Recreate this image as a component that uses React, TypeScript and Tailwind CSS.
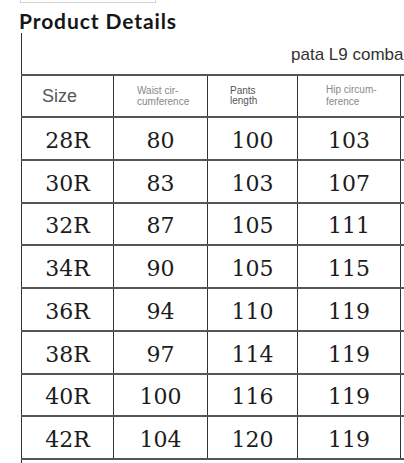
import React from 'react';

const rows: [string, number, number, number][] = [
  ['28R', 80, 100, 103],
  ['30R', 83, 103, 107],
  ['32R', 87, 105, 111],
  ['34R', 90, 105, 115],
  ['36R', 94, 110, 119],
  ['38R', 97, 114, 119],
  ['40R', 100, 116, 119],
  ['42R', 104, 120, 119],
];

const cell = 'border-x border-x-[#333] border-y-2 border-y-[#555] text-center align-middle p-0';

export default function App() {
  return (
    <div className="w-[404px] h-[463px] overflow-hidden bg-white">
      {/* cut-off box above the heading */}
      <div className="ml-[20px] w-[136px] h-[3px] border border-t-0 border-[#d4d4d4]" />

      <h2 className="ml-[19px] mt-[5px] h-[25px] text-[21px] leading-[25px] font-bold text-[#161616] font-['Comic_Sans_MS','Lato',sans-serif] tracking-[0.9px]">
        Product Details
      </h2>

      <table className="ml-[21px] border-collapse table-fixed w-[480px] font-['DejaVu_Serif',serif]">
        <colgroup>
          <col className="w-[92px]" />
          <col className="w-[94px]" />
          <col className="w-[90px]" />
          <col className="w-[103px]" />
          <col className="w-[101px]" />
        </colgroup>
        <tbody>
          <tr className="h-[42px]">
            <td colSpan={5} className="border-l border-l-[#333] border-b-2 border-b-[#555] p-0 pl-[269px] align-middle">
              <span className="block whitespace-nowrap pt-[2px] text-[17px] text-[#333] font-['Liberation_Sans',sans-serif]">
                pata L9 comba
              </span>
            </td>
          </tr>
          <tr className="h-[42px] font-['Liberation_Sans',sans-serif]">
            <td className={`${cell} text-left pl-[20px] text-[18px] text-[#555]`}>Size</td>
            <td className={`${cell} text-left pl-[23px] text-[10px] leading-[11px] text-[#888]`}>
              Waist cir-
              <br />
              cumference
            </td>
            <td className={`${cell} text-left pl-[22px] text-[10px] leading-[10px] text-[#555]`}>
              Pants
              <br />
              length
            </td>
            <td className={`${cell} text-left pl-[28px] text-[10px] leading-[12px] text-[#888]`}>
              Hip circum-
              <br />
              ference
            </td>
            <td className={cell} />
          </tr>
          {rows.map(([size, waist, length, hip]) => (
            <tr key={size} className="h-[42.75px] text-[22px] text-[#1c1c1c]">
              <td className={cell}>
                <span className="relative top-[2px]">{size}</span>
              </td>
              <td className={cell}>
                <span className="relative top-[2px]">{waist}</span>
              </td>
              <td className={cell}>
                <span className="relative top-[2px]">{length}</span>
              </td>
              <td className={cell}>
                <span className="relative top-[2px]">{hip}</span>
              </td>
              <td className={cell} />
            </tr>
          ))}
          <tr className="h-[20px]">
            <td colSpan={5} className="border-l border-l-[#333] p-0" />
          </tr>
        </tbody>
      </table>
    </div>
  );
}
